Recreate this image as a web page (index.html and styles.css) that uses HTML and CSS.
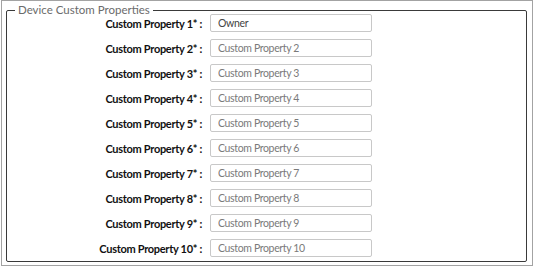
FILE: index.html
```html
<!DOCTYPE html>
<html lang="en">
<head>
    <meta charset="UTF-8">
    <title>Device Custom Properties</title>
    <link rel="stylesheet" href="styles.css">
</head>
<body>
    <div class="panel">
        <fieldset class="props-box">
            <legend>Device Custom Properties</legend>
            <div class="props-grid">
                <label class="prop-label" for="cp1">Custom Property 1* :</label>
                <input class="prop-input" id="cp1" type="text" value="Owner">
                <label class="prop-label" for="cp2">Custom Property 2* :</label>
                <input class="prop-input" id="cp2" type="text" placeholder="Custom Property 2">
                <label class="prop-label" for="cp3">Custom Property 3* :</label>
                <input class="prop-input" id="cp3" type="text" placeholder="Custom Property 3">
                <label class="prop-label" for="cp4">Custom Property 4* :</label>
                <input class="prop-input" id="cp4" type="text" placeholder="Custom Property 4">
                <label class="prop-label" for="cp5">Custom Property 5* :</label>
                <input class="prop-input" id="cp5" type="text" placeholder="Custom Property 5">
                <label class="prop-label" for="cp6">Custom Property 6* :</label>
                <input class="prop-input" id="cp6" type="text" placeholder="Custom Property 6">
                <label class="prop-label" for="cp7">Custom Property 7* :</label>
                <input class="prop-input" id="cp7" type="text" placeholder="Custom Property 7">
                <label class="prop-label" for="cp8">Custom Property 8* :</label>
                <input class="prop-input" id="cp8" type="text" placeholder="Custom Property 8">
                <label class="prop-label" for="cp9">Custom Property 9* :</label>
                <input class="prop-input" id="cp9" type="text" placeholder="Custom Property 9">
                <label class="prop-label" for="cp10">Custom Property 10* :</label>
                <input class="prop-input" id="cp10" type="text" placeholder="Custom Property 10">
            </div>
        </fieldset>
    </div>
</body>
</html>
```
FILE: styles.css
```css
body {
    margin: 0;
    background: #fff;
    font-family: Lato, 'Open Sans', Arial, sans-serif;
}
.panel {
    box-sizing: border-box;
    width: 532px;
    height: 266px;
    margin-left: 1px;
    border: 1px solid #a3a3a3;
    padding: 5px 0 0 4px;
}
.props-box {
    box-sizing: border-box;
    width: 521px;
    margin: 0;
    padding: 0 0 4px 0;
    border: 1px solid #3a3a3a;
    border-radius: 2px;
}
.props-box legend {
    margin-left: 8px;
    padding: 0 3px;
    line-height: 8px;
    font-size: 11.5px;
    color: #6b6b6b;
}
.props-grid {
    display: grid;
    grid-template-columns: 195px 162px;
    column-gap: 8px;
    row-gap: 7px;
    align-items: center;
}
.prop-label {
    text-align: right;
    font-size: 11px;
    font-weight: 700;
    letter-spacing: -0.3px;
    color: #111;
    white-space: nowrap;
}
.prop-input {
    box-sizing: border-box;
    height: 18px;
    width: 162px;
    margin: 0;
    padding: 0 7px;
    border: 1px solid #c8c8c8;
    border-radius: 2px;
    font-family: Lato, 'Open Sans', Arial, sans-serif;
    font-size: 10.5px;
    letter-spacing: -0.35px;
    color: #444;
    outline: none;
}
.prop-input::placeholder {
    color: #7a7a7a;
}
```
